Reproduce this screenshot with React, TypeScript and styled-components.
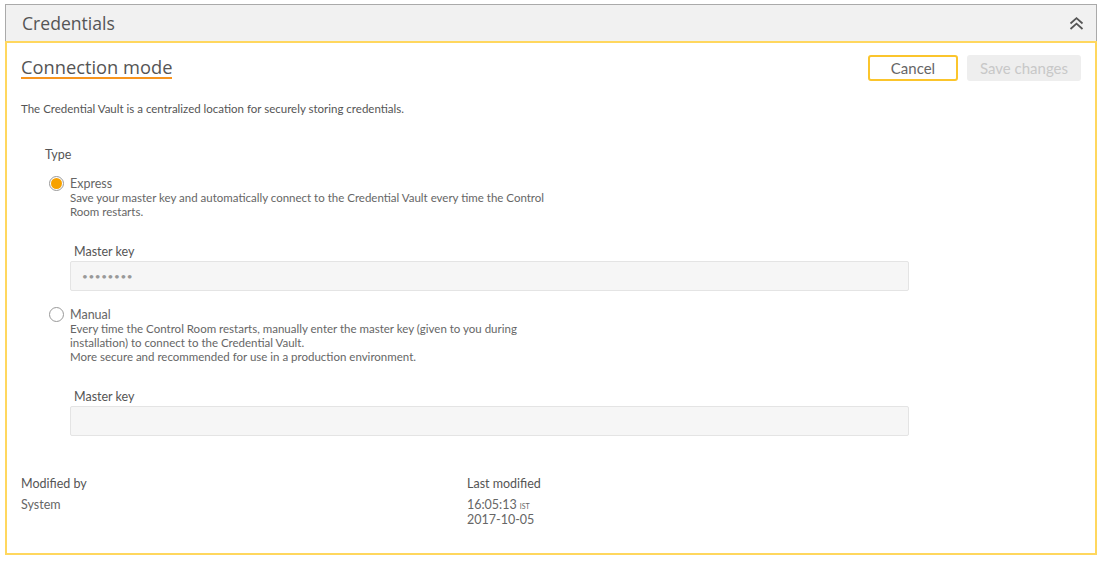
import React from "react";
import styled, { createGlobalStyle } from "styled-components";

const Global = createGlobalStyle`
  html, body { margin: 0; padding: 0; background: #fff; }
  body { font-family: Lato, "Open Sans", sans-serif; color: #555; }
`;

const Page = styled.div`
  padding: 4px 7px 0 5px;
`;

const Header = styled.div`
  height: 36px;
  background: #f1f1f1;
  border: 1px solid #aaa;
  border-bottom: none;
  display: flex;
  align-items: center;
  justify-content: space-between;
  padding: 0 12px 0 16px;
`;

const HeaderTitle = styled.div`
  font-family: "Open Sans", Lato, sans-serif;
  font-size: 17.6px;
  color: #555;
`;

const Body = styled.div`
  border: 2px solid #ffd75e;
  padding: 14px 14px 26px 14px;
`;

const TopRow = styled.div`
  display: flex;
  justify-content: space-between;
  align-items: flex-start;
`;

const SectionTitle = styled.div`
  font-family: "Open Sans", Lato, sans-serif;
  font-size: 18.3px;
  color: #555;
  border-bottom: 2px solid #f7941d;
  line-height: 20px;
`;

const Buttons = styled.div`
  display: flex;
  gap: 9px;
  margin-top: -2px;
`;

const Button = styled.button<{ $primary?: boolean }>`
  font-family: inherit;
  font-size: 15px;
  height: 26px;
  border-radius: 3px;
  padding: 0;
  width: ${(p) => (p.$primary ? "114px" : "90px")};
  background: ${(p) => (p.$primary ? "#eeeeee" : "#fff")};
  border: ${(p) => (p.$primary ? "none" : "2px solid #fbc52c")};
  color: ${(p) => (p.$primary ? "#c8c8c8" : "#666")};
`;

const Intro = styled.div`
  font-size: 11.5px;
  line-height: 14px;
  margin-top: 21px;
  color: #555;
`;

const Form = styled.div`
  padding-left: 24px;
  margin-top: 31px;
`;

const TypeLabel = styled.div`
  font-size: 12.5px;
  line-height: 16px;
  color: #555;
`;

const Option = styled.div<{ $gap: number }>`
  display: flex;
  gap: 6px;
  margin-top: ${(p) => p.$gap}px;
  align-items: flex-start;
`;

const Radio = styled.span<{ $checked?: boolean }>`
  width: 15px;
  height: 15px;
  box-sizing: border-box;
  border-radius: 50%;
  border: 1px solid #999;
  display: flex;
  align-items: center;
  justify-content: center;
  margin-left: 4px;
  flex: none;
  &::after {
    content: "";
    width: 11px;
    height: 11px;
    border-radius: 50%;
    background: ${(p) => (p.$checked ? "#f7a100" : "transparent")};
  }
`;

const OptionBody = styled.div`
  flex: 1;
`;

const OptionName = styled.div`
  font-size: 12.5px;
  color: #666;
  line-height: 15px;
`;

const OptionDesc = styled.div`
  font-size: 11.5px;
  line-height: 14px;
  color: #666;
  width: 490px;
`;

const Field = styled.div<{ $gap: number }>`
  margin-top: ${(p) => p.$gap}px;
  width: 839px;
`;

const FieldLabel = styled.div`
  font-size: 12.5px;
  line-height: 16px;
  color: #555;
  padding-left: 4px;
  margin-bottom: 1px;
`;

const Input = styled.div`
  height: 28px;
  background: #f6f6f6;
  border: 1px solid #e4e4e4;
  border-radius: 2px;
  font-size: 10px;
  color: #999;
  display: flex;
  align-items: center;
  padding-left: 11px;
  letter-spacing: 0.6px;
`;

const Meta = styled.div`
  display: grid;
  grid-template-columns: 446px 1fr;
  margin-top: 40px;
`;

const MetaLabel = styled.div`
  font-size: 12.5px;
  line-height: 16px;
  color: #555;
  margin-bottom: 5px;
`;

const MetaValue = styled.div`
  font-size: 12.5px;
  color: #666;
  line-height: 15px;
  height: 15px;
  display: flex;
  align-items: baseline;
`;

const Tz = styled.span`
  font-size: 7px;
  line-height: 7px;
  margin-left: 3px;
`;

const Chevron = () => (
  <svg width="15" height="13" viewBox="0 0 15 13" fill="none" stroke="#555" strokeWidth="1.8">
    <path d="M1.5 6.5 L7.5 1.2 L13.5 6.5" />
    <path d="M1.5 12 L7.5 6.7 L13.5 12" />
  </svg>
);

export default function App() {
  return (
    <Page>
      <Global />
      <Header>
        <HeaderTitle>Credentials</HeaderTitle>
        <Chevron />
      </Header>
      <Body>
        <TopRow>
          <SectionTitle>Connection mode</SectionTitle>
          <Buttons>
            <Button>Cancel</Button>
            <Button $primary>Save changes</Button>
          </Buttons>
        </TopRow>
        <Intro>The Credential Vault is a centralized location for securely storing credentials.</Intro>
        <Form>
          <TypeLabel>Type</TypeLabel>
          <Option $gap={13}>
            <Radio $checked />
            <OptionBody>
              <OptionName>Express</OptionName>
              <OptionDesc>
                Save your master key and automatically connect to the Credential Vault every time the Control Room restarts.
              </OptionDesc>
              <Field $gap={25}>
                <FieldLabel>Master key</FieldLabel>
                <Input>••••••••</Input>
              </Field>
            </OptionBody>
          </Option>
          <Option $gap={16}>
            <Radio />
            <OptionBody>
              <OptionName>Manual</OptionName>
              <OptionDesc>
                Every time the Control Room restarts, manually enter the master key (given to you during installation) to connect to the Credential Vault.
                <br />
                More secure and recommended for use in a production environment.
              </OptionDesc>
              <Field $gap={25}>
                <FieldLabel>Master key</FieldLabel>
                <Input />
              </Field>
            </OptionBody>
          </Option>
        </Form>
        <Meta>
          <div>
            <MetaLabel>Modified by</MetaLabel>
            <MetaValue>System</MetaValue>
          </div>
          <div>
            <MetaLabel>Last modified</MetaLabel>
            <MetaValue>
              16:05:13<Tz>IST</Tz>
            </MetaValue>
            <MetaValue>2017-10-05</MetaValue>
          </div>
        </Meta>
      </Body>
    </Page>
  );
}
